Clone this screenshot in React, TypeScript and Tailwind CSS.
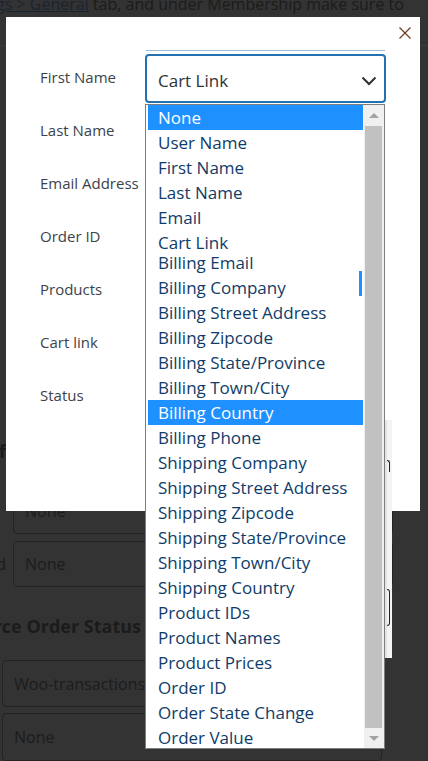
const options = [
  "None",
  "User Name",
  "First Name",
  "Last Name",
  "Email",
  "Cart Link",
  "Billing Email",
  "Billing Company",
  "Billing Street Address",
  "Billing Zipcode",
  "Billing State/Province",
  "Billing Town/City",
  "Billing Country",
  "Billing Phone",
  "Shipping Company",
  "Shipping Street Address",
  "Shipping Zipcode",
  "Shipping State/Province",
  "Shipping Town/City",
  "Shipping Country",
  "Product IDs",
  "Product Names",
  "Product Prices",
  "Order ID",
  "Order State Change",
  "Order Value",
];

const selected = ["None", "Billing Country"];

const labels = [
  "First Name",
  "Last Name",
  "Email Address",
  "Order ID",
  "Products",
  "Cart link",
  "Status",
];

const PageInput = ({ text }: { text: string }) => (
  <div className="w-[380px] h-full rounded-[4px] border border-[#232323] flex items-center text-[16px] text-[#1c1c1c]">
    <span className="pl-[11px]">{text}</span>
  </div>
);

const BackgroundPage = () => (
  <div className="flex flex-col text-[#1b1b1b]">
    <p className="h-[17px] -mt-[8px] -ml-[4px] whitespace-nowrap text-[16px] leading-[24px]">
      <span className="underline text-[#1a2430]">gs &gt; General</span> tab, and under Membership make sure to
    </p>
    <div className="h-[37px] border-b border-[#3c3c3c]" />
    <div className="h-[395px]" />

    <div className="h-[20px] flex items-center">
      <div className="w-[6px] overflow-hidden flex justify-end">
        <span className="whitespace-nowrap font-bold text-[18px]">Fields of</span>
      </div>
    </div>

    <div className="mt-[27px] h-[46px] flex">
      <div className="w-[13px]" />
      <PageInput text="None" />
    </div>

    <div className="mt-[7px] h-[46px] flex items-center">
      <div className="w-[13px] h-full flex items-center">
        <div className="w-[6px] overflow-hidden flex justify-end">
          <span className="whitespace-nowrap text-[16px]">Billing Field</span>
        </div>
      </div>
      <PageInput text="None" />
    </div>

    <div className="mt-[26px] h-[26px] flex items-center">
      <div className="w-[141px] overflow-hidden flex justify-end">
        <span className="whitespace-nowrap font-bold text-[18px]">Woocommerce Order Status</span>
      </div>
    </div>

    <div className="mt-[21px] h-[47px] flex pl-[2px]">
      <PageInput text="Woo-transactions" />
    </div>

    <div className="mt-[6px] h-[48px] flex pl-[2px]">
      <PageInput text="None" />
    </div>
  </div>
);

const Modal = () => (
  <div className="absolute left-[6px] top-[17px] w-[414px] h-[494px] bg-white">
    <button className="absolute top-[10px] right-[9px] w-[12px] h-[12px]">
      <svg width="12" height="12" viewBox="0 0 12 12" fill="none">
        <path d="M0.5 0.5 L11.5 11.5 M11.5 0.5 L0.5 11.5" stroke="#6b3a24" strokeWidth="1.2" />
      </svg>
    </button>

    <div className="flex flex-col pt-[33px] pl-[34px]">
      {labels.map((label, i) => (
        <div key={label} className="h-[53px] flex items-center">
          <div className="w-[105px] text-[15px] text-[#3c434a] mt-[2px]">{label}</div>
          {i === 0 && (
            <div className="self-start flex flex-col">
              <div className="h-px mx-[1px] bg-[#9dbbd9]" />
              <div className="mt-[3px] w-[241px] h-[49px] border-2 border-[#2271b1] rounded-[4px] flex items-center justify-between pl-[11px] pr-[7px] pt-[4px]">
                <span className="text-[17px] text-[#2c3338]">Cart Link</span>
                <svg width="16" height="10" viewBox="0 0 16 10" fill="none">
                  <path d="M1.5 1.5 L8 8 L14.5 1.5" stroke="#2c3338" strokeWidth="2" />
                </svg>
              </div>
            </div>
          )}
        </div>
      ))}
    </div>
  </div>
);

const Dropdown = () => (
  <div className="absolute left-[145px] top-[104px] w-[240px] h-[645px] bg-white border border-[#7e7e7e] flex">
    <div className="relative ml-[2px] w-[215px] h-full overflow-hidden">
      {options.map((opt) => (
        <div
          key={opt}
          className={`${opt === "Cart Link" ? "h-[20px]" : "h-[25px]"} leading-[25px] pl-[10px] text-[17px] whitespace-nowrap ${
            selected.includes(opt) ? "bg-[#1e90ff] text-white" : "text-[#0f3c69]"
          }`}
        >
          {opt}
        </div>
      ))}
      <div className="absolute left-[211px] top-[166px] w-[3px] h-[25px] bg-[#1e90ff]" />
    </div>
    <div className="ml-[1px] w-[20px] h-full bg-[#f0f0f0] flex flex-col items-center">
      <div className="h-[21px] flex items-center justify-center">
        <svg width="10" height="5" viewBox="0 0 10 5">
          <path d="M0 5 L5 0 L10 5 Z" fill="#a3a3a3" />
        </svg>
      </div>
      <div className="w-[17px] flex-1 bg-[#c1c1c1] ml-[-1px]" />
      <div className="h-[20px] flex items-center justify-center">
        <svg width="10" height="5" viewBox="0 0 10 5">
          <path d="M0 0 L10 0 L5 5 Z" fill="#a3a3a3" />
        </svg>
      </div>
    </div>
  </div>
);

const EdgeStrip = () => (
  <div className="absolute left-[385px] top-[420px] w-[7px] h-[238px] bg-[#f4f4f4] border-l-2 border-[#e4e4e4] flex flex-col">
    <div className="mt-[40px] w-[3px] h-[12px] border-t border-r border-[#1f1f1f] rounded-tr-[3px]" />
    <div className="mt-[117px] w-[3px] h-[37px] border-y border-r border-[#1f1f1f] rounded-r-[3px]" />
  </div>
);

export default function App() {
  return (
    <div
      className="relative w-[428px] h-[761px] overflow-hidden bg-[#333333]"
      style={{ fontFamily: '"Open Sans", "Noto Sans", sans-serif' }}
    >
      <BackgroundPage />
      <Modal />
      <EdgeStrip />
      <Dropdown />
    </div>
  );
}
